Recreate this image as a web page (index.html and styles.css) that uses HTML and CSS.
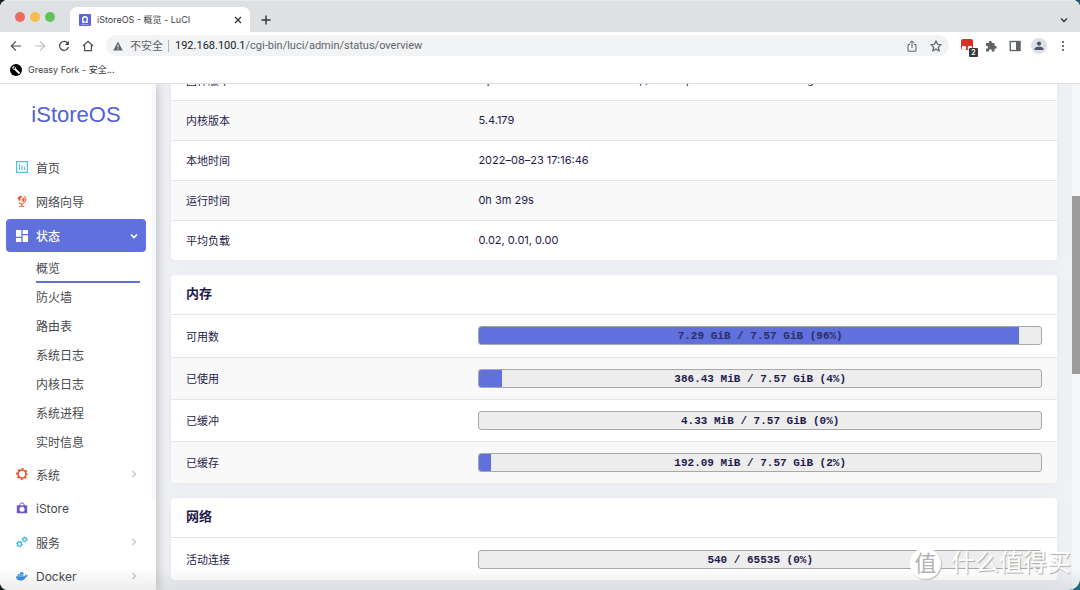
FILE: index.html
```html
<!DOCTYPE html>
<html lang="zh-CN">
<head>
<meta charset="utf-8">
<title>iStoreOS - 概览 - LuCI</title>
<link rel="stylesheet" href="styles.css">
</head>
<body>
<div class="window">
  <header class="chrome">
    <div class="tabstrip">
      <div class="lights"><i class="light red"></i><i class="light yellow"></i><i class="light green"></i></div>
      <div class="tab">
        <svg class="favicon" viewBox="0 0 12 12"><rect width="12" height="12" rx="1" fill="#5a63dc"/><path d="M3.200 8.300H5V8C2.900 6.600 3.200 2.700 6 2.700S9.100 6.600 7 8v.3h1.800" fill="none" stroke="#fff" stroke-width="1.400"/><path d="M2 10.500h8" stroke="#aab0f2" stroke-width=".7"/></svg>
        <span class="tab-title">iStoreOS - 概览 - LuCI</span>
        <button class="plain" aria-label="关闭标签页"><svg width="8" height="8" viewBox="0 0 8 8"><path d="M1 1l6 6M7 1L1 7" stroke="#333" stroke-width="1.300"/></svg></button>
      </div>
      <button class="plain newtab" aria-label="新标签页"><svg width="10" height="10" viewBox="0 0 10 10"><path d="M5 .5v9M.5 5h9" stroke="#333" stroke-width="1.400"/></svg></button>
      <button class="plain tabsearch" aria-label="搜索标签页"><svg width="8" height="8" viewBox="0 0 8 8"><path d="M1 2.500l3 3 3-3" fill="none" stroke="#333" stroke-width="1.300"/></svg></button>
    </div>
    <div class="toolbar">
      <button class="plain" aria-label="后退"><svg class="ic" viewBox="0 0 12 12"><path d="M11 6H1.500M6 1.300L1.300 6 6 10.700" fill="none" stroke="#4a4d51" stroke-width="1.200"/></svg></button>
      <button class="plain" aria-label="前进"><svg class="ic" viewBox="0 0 12 12"><path d="M1 6h9.500M6 1.300L10.700 6 6 10.700" fill="none" stroke="#bcbec1" stroke-width="1.200"/></svg></button>
      <button class="plain" aria-label="刷新"><svg class="ic" viewBox="0 0 12 12"><path d="M9.800 3.300A4.500 4.500 0 1 0 10.500 7" fill="none" stroke="#4a4d51" stroke-width="1.300"/><path d="M11 .8v4.200H6.800z" fill="#4a4d51"/></svg></button>
      <button class="plain" aria-label="主页"><svg class="ic" viewBox="0 0 12 12"><path d="M1 6l5-4.600L11 6M2.600 5v5.700h6.800V5" fill="none" stroke="#4a4d51" stroke-width="1.200"/></svg></button>
      <div class="address">
        <svg width="10" height="10" viewBox="0 0 10 10"><path d="M5 .5L9.700 9.500H.3z" fill="#5f6368"/><path d="M5 3.700v2.800M5 7.300v1.200" stroke="#fff"/></svg>
        <span class="insecure">不安全</span>
        <span class="url"><b>192.168.100.1</b>/cgi-bin/luci/admin/status/overview</span>
        <button class="plain" aria-label="分享"><svg class="ic" viewBox="0 0 12 12"><path d="M4 4.500H2v6.700h8V4.500H8M6 8V1M3.700 3.200L6 .9l2.300 2.300" fill="none" stroke="#5f6368"/></svg></button>
        <button class="plain star" aria-label="收藏"><svg class="ic" viewBox="0 0 12 12"><path d="M6 1l1.500 3.300 3.500.4-2.600 2.400.7 3.600L6 8.900l-3.100 1.800.7-3.600L1 4.700l3.500-.4z" fill="none" stroke="#5f6368" stroke-width="1.200"/></svg></button>
      </div>
      <div class="extensions">
        <button class="plain ext" aria-label="扩展"><svg width="16" height="16" viewBox="0 0 16 16"><rect width="12" height="11" rx="2" fill="#d93025"/><circle cx="3" cy="9" r="2.300" fill="#fff"/><circle cx="9" cy="9" r="2.300" fill="#fff"/></svg><span class="badge">2</span></button>
        <button class="plain" aria-label="扩展程序"><svg class="ic" viewBox="0 0 12 12"><path d="M1 3h2.800V2.200a1.500 1.500 0 0 1 3 0V3H9.500v2.700h.7a1.500 1.500 0 0 1 0 3h-.7v2.800H6.800v-.8a1.400 1.400 0 0 0-2.800 0v.8H1V8.700h.7a1.400 1.400 0 0 0 0-2.800H1z" fill="#5f6368"/></svg></button>
        <button class="plain" aria-label="侧边栏"><svg class="ic" viewBox="0 0 12 12"><rect x="1.200" y="1.500" width="9.600" height="9" fill="none" stroke="#5f6368" stroke-width="1.400"/><path d="M7 1h4.500v10H7z" fill="#5f6368"/></svg></button>
        <button class="plain profile" aria-label="用户"><svg width="10" height="10" viewBox="0 0 10 10"><circle cx="5" cy="2.600" r="2.100" fill="#4b5570"/><path d="M.5 9V7.800C.5 6.300 3 5.700 5 5.700s4.500.6 4.500 2.100V9z" fill="#4b5570"/></svg></button>
        <button class="plain" aria-label="菜单"><svg class="ic" viewBox="0 0 12 12"><g fill="#4a4d51"><circle cx="6" cy="2" r="1.100"/><circle cx="6" cy="6" r="1.100"/><circle cx="6" cy="10" r="1.100"/></g></svg></button>
      </div>
    </div>
    <nav class="bookmarks"><a href="#"><svg class="ic" viewBox="0 0 12 12"><circle cx="6" cy="6" r="6" fill="#000"/><path d="M5.500 5.500l4 4" stroke="#fff" stroke-width="1.800"/><path d="M2.300 4.300L4.200 2.200M3.200 5.300L5.500 5.500 5.200 3.200" stroke="#fff" stroke-width="1.100" fill="none"/></svg>Greasy Fork - 安全...</a></nav>
  </header>

  <div class="page">
    <aside class="sidebar">
      <a class="brand" href="#">iStoreOS</a>
      <nav class="menu">
        <a class="item" href="#"><svg class="ic" viewBox="0 0 12 12"><path d="M.6.6h10.800v10.800H.6zM3.500 3v6M6 4.500V9M8.500 6v3" fill="none" stroke="#4fc3df" stroke-width="1.200"/></svg>首页</a>
        <a class="item" href="#"><svg class="ic" viewBox="0 0 12 12"><circle cx="5" cy="4.500" r="3.800" fill="#fde5df"/><path d="M1.500 3L4 .8l2 .4-.6 1.600L4 3.500l.6 1.300L3.800 6 2.500 4.600zM6.500 3.200L8.300 3l.4 1.800L7.200 7.300 6.300 5.600z" fill="#e8562f"/><path d="M8.300.8a4.800 4.800 0 0 1-5.600 7.700M5.800 9.200v1.900M3.300 11.300h5" fill="none" stroke="#e8562f"/></svg>网络向导</a>
        <a class="item active" href="#"><svg class="ic" viewBox="0 0 12 12"><path d="M0 0h5.300v6.800H0zM6.600 0H12v4H6.600zM0 8h5.300v4H0zM6.600 5.200H12V12H6.600z" fill="#fff"/></svg>状态<svg class="arrow" viewBox="0 0 8 8"><path d="M1 2.500l3 3 3-3" fill="none" stroke="#fff" stroke-width="1.700"/></svg></a>
        <div class="submenu">
          <a class="current" href="#">概览</a><a href="#">防火墙</a><a href="#">路由表</a><a href="#">系统日志</a><a href="#">内核日志</a><a href="#">系统进程</a><a href="#">实时信息</a>
        </div>
        <a class="item" href="#"><svg class="ic" viewBox="0 0 12 12"><circle cx="6" cy="6" r="4" fill="none" stroke="#e8562f" stroke-width="1.700"/><circle cx="6" cy="6" r="5.200" fill="none" stroke="#e8562f" stroke-width="1.500" stroke-dasharray="2 2.084" stroke-dashoffset="1"/></svg>系统<svg class="arrow" viewBox="0 0 8 8"><path d="M2.500 1l3 3-3 3" fill="none" stroke="#c3c5c9" stroke-width="1.400"/></svg></a>
        <a class="item" href="#"><svg class="ic" viewBox="0 0 12 12"><path d="M.8 3.300h10.400v8H.8z" fill="#7354c8"/><path d="M3.700 3.500a2.300 2.700 0 0 1 4.600 0" fill="none" stroke="#7354c8"/><circle cx="6" cy="7.200" r="2.500" fill="#fff"/></svg>iStore</a>
        <a class="item" href="#"><svg class="ic" viewBox="0 0 12 12"><g fill="none" stroke="#3db5d5"><circle cx="3.500" cy="8" r="2.100" stroke-width="1.200"/><circle cx="3.500" cy="8" r="3" stroke-dasharray="1.300 1.840"/><circle cx="8.700" cy="3.500" r="1.800" stroke-width="1.200"/><circle cx="8.700" cy="3.500" r="2.700" stroke-dasharray="1.200 1.630"/></g></svg>服务<svg class="arrow" viewBox="0 0 8 8"><path d="M2.500 1l3 3-3 3" fill="none" stroke="#c3c5c9" stroke-width="1.400"/></svg></a>
        <a class="item" href="#"><svg class="ic" viewBox="0 0 12 12"><path d="M0 6.200h8.800c.5-.4.300-1.500 0-2 .8 0 1.200.7 1.300 1.200.7-.2 1.400 0 1.900.3-.4.800-1 1-1.900 1C9 9.600 7 10.600 4.500 10.600 1.500 10.600 0 9 0 6.200zM1.500 4.200h6v1.600h-6zM4 2.300h3.500V4H4z" fill="#3c8fe0"/></svg>Docker<svg class="arrow" viewBox="0 0 8 8"><path d="M2.500 1l3 3-3 3" fill="none" stroke="#c3c5c9" stroke-width="1.400"/></svg></a>
      </nav>
      <div class="side-track"></div>
    </aside>

    <main class="content">
      <section class="card system">
        <table>
          <tr><th scope="row">固件版本</th><td>OpenWrt iStoreOS 2022081910, / LuCI openwrt-21.02.3 branch git-22.213.35964-87836ca</td></tr>
          <tr><th scope="row">内核版本</th><td>5.4.179</td></tr>
          <tr><th scope="row">本地时间</th><td>2022–08–23 17:16:46</td></tr>
          <tr><th scope="row">运行时间</th><td>0h 3m 29s</td></tr>
          <tr><th scope="row">平均负载</th><td>0.02, 0.01, 0.00</td></tr>
        </table>
      </section>
      <section class="card usage">
        <h2>内存</h2>
        <table>
          <tr><th scope="row">可用数</th><td><div class="bar"><div class="fill" style="width:96%"></div><span class="on-fill">7.29 GiB / 7.57 GiB (96%)</span></div></td></tr>
          <tr><th scope="row">已使用</th><td><div class="bar"><div class="fill" style="width:4%"></div><span>386.43 MiB / 7.57 GiB (4%)</span></div></td></tr>
          <tr><th scope="row">已缓冲</th><td><div class="bar"><div class="fill" style="width:0%"></div><span>4.33 MiB / 7.57 GiB (0%)</span></div></td></tr>
          <tr><th scope="row">已缓存</th><td><div class="bar"><div class="fill" style="width:2%"></div><span>192.09 MiB / 7.57 GiB (2%)</span></div></td></tr>
        </table>
      </section>
      <section class="card usage">
        <h2>网络</h2>
        <table>
          <tr><th scope="row">活动连接</th><td><div class="bar"><div class="fill" style="width:0%"></div><span>540 / 65535 (0%)</span></div></td></tr>
        </table>
      </section>
    </main>
    <div class="scroll"><div class="thumb"></div></div>
  </div>
  <div class="shade"></div>
  <div class="watermark"><span class="seal">值</span><span>什么值得买</span></div>
</div>
</body>
</html>
```
FILE: styles.css
```css
* { box-sizing: border-box; }
body {
  margin: 0;
  background: linear-gradient(100deg, #10231d 60%, #1c6e84);
  font-family: Inter, "Noto Sans CJK SC", sans-serif;
  color: #1f1b4b;
}
a { color: inherit; text-decoration: none; }
svg { display: block; flex: none; }
.ic { width: 12px; height: 12px; }
.plain {
  display: flex;
  align-items: center;
  justify-content: center;
  padding: 0;
  border: 0;
  background: none;
  font: inherit;
}
.window {
  position: relative;
  display: flex;
  flex-direction: column;
  height: 100vh;
  border-radius: 8px 8px 12px 8px;
  overflow: hidden;
  background: #f0f1f5;
}

/* Browser chrome */
.chrome { flex: none; background: #fff; border-bottom: 1px solid #dfe0e2; }
.tabstrip {
  display: flex;
  align-items: center;
  height: 32px;
  padding: 0 12px 0 15px;
  background: #dee0e4;
  border-top: 1px solid #e9eaed;
}
.lights { display: flex; gap: 5px; width: 55px; }
.light { width: 10px; height: 10px; border-radius: 50%; }
.red { background: #ed6a5e; }
.yellow { background: #f4bd4f; }
.green { background: #5fc454; }
.tab {
  display: flex;
  align-items: center;
  align-self: flex-end;
  gap: 6px;
  width: 180px;
  height: 25px;
  padding: 0 8px 0 9px;
  border-radius: 7px 7px 0 0;
  background: #fff;
  font-size: 9px;
  color: #3c4043;
}
.favicon { width: 12px; height: 12px; }
.tab-title { flex: 1; white-space: nowrap; }
.newtab { margin: 6px 0 0 11px; }
.tabsearch { margin: 6px 0 0 auto; }
.toolbar { display: flex; align-items: center; gap: 12px; height: 27px; padding: 0 11px 0 10px; }
.address {
  flex: 1;
  display: flex;
  align-items: center;
  height: 21px;
  padding: 0 7px;
  border-radius: 11px;
  background: #f1f3f4;
  font-size: 10px;
  color: #5f6368;
}
.insecure { margin-left: 7px; padding-right: 5px; border-right: 1px solid #b4b7ba; line-height: 12px; font-size: 11px; }
.url { flex: 1; margin-left: 6px; font-family: Roboto, sans-serif; font-size: 11px; }
.url b { font-weight: 400; color: #202124; }
.star { margin-left: 12px; }
.extensions { display: flex; align-items: center; gap: 12px; }
.ext { position: relative; width: 12px; }
.ext svg { margin-top: 3px; margin-left: 4px; }
.badge {
  position: absolute;
  right: -5px;
  bottom: -2px;
  width: 9px;
  border-radius: 1px;
  background: #3a3a3a;
  color: #fff;
  font-size: 7px;
  line-height: 9px;
  font-weight: 600;
}
.profile { width: 16px; height: 16px; margin: 0 -2px; border-radius: 50%; background: #dde0e8; }
.bookmarks { display: flex; height: 24px; padding-left: 10px; font-size: 9px; color: #3c4043; }
.bookmarks a { display: flex; align-items: center; gap: 6px; padding-bottom: 3px; }

/* Page */
.page { display: flex; flex: 1; min-height: 0; overflow: hidden; }
.sidebar {
  position: relative;
  z-index: 1;
  width: 156px;
  flex: none;
  background: #fff;
  box-shadow: 2px 0 10px rgba(0, 0, 0, 0.2);
}
.side-track { position: absolute; top: 0; right: 0; width: 4px; height: 416px; background: #f7f8fc; }
.brand {
  display: block;
  padding: 15px 4px 20px 0;
  text-align: center;
  font: 22px/32px "Liberation Sans", sans-serif;
  color: #5161d9;
}
.menu { font-size: 12px; color: #46494e; }
.item { display: flex; align-items: center; gap: 8px; height: 32px; margin: 0 10px 2px 6px; padding: 0 8px 0 10px; border-radius: 4px; }
.active { height: 33px; background: #6070dd; color: #fff; font-weight: 500; }
.arrow { width: 8px; height: 8px; margin-left: auto; }
.submenu { display: flex; flex-direction: column; margin: 0 16px 1px 36px; }
.submenu a { height: 29px; line-height: 29px; }
.current { border-bottom: 2px solid #6070dd; }

.content { flex: 1; min-width: 0; padding: 0 15px; margin-top: -24px; }
.card { margin-bottom: 15px; border-radius: 4px; background: #fff; overflow: hidden; box-shadow: 0 0 12px rgba(60, 70, 110, 0.05); }
.card h2 { height: 40px; margin: 0; padding-left: 15px; font-size: 13px; line-height: 37px; font-weight: 700; border-bottom: 1px solid #e6e6e6; }
table { width: 100%; border-collapse: collapse; table-layout: fixed; font-size: 11px; }
th { width: 33%; font-weight: 400; text-align: left; }
th, td { height: 40px; padding: 0 15px; white-space: nowrap; }
.usage th, .usage td { height: 42px; }
tr + tr { border-top: 1px solid #e6e6e6; }
tr:nth-child(even) { background: #f9f9f9; }
.bar {
  display: grid;
  height: 19px;
  border: 1px solid #a8a8a8;
  border-radius: 3px;
  background: #ededed;
  overflow: hidden;
}
.bar > * { grid-area: 1 / 1; }
.fill { background: #6070dd; }
.bar span { text-align: center; font: 700 11px/19px "Liberation Mono", monospace; }
.bar .on-fill { color: #2d2e63; }
.scroll { width: 8px; padding-top: 112px; background: #f5f6f8; }
.thumb { height: 178px; background: #9b9b9b; }

/* Overlays */
.shade { position: absolute; inset: auto 0 0; height: 22px; z-index: 2; background: linear-gradient(transparent, rgba(40, 45, 55, 0.09)); }
.watermark {
  position: absolute;
  z-index: 3;
  right: 9px;
  bottom: 11px;
  display: flex;
  align-items: center;
  gap: 10px;
  font-size: 24px;
  line-height: 32px;
  color: #fff;
  text-shadow: 1px 1px 1px #aaa;
}
.seal { width: 31px; height: 31px; border-radius: 50%; background: #fff; box-shadow: 1px 1px 1px #bbb; text-align: center; font-size: 22px; line-height: 31px; color: #b3b3b3; text-shadow: none; }
```
